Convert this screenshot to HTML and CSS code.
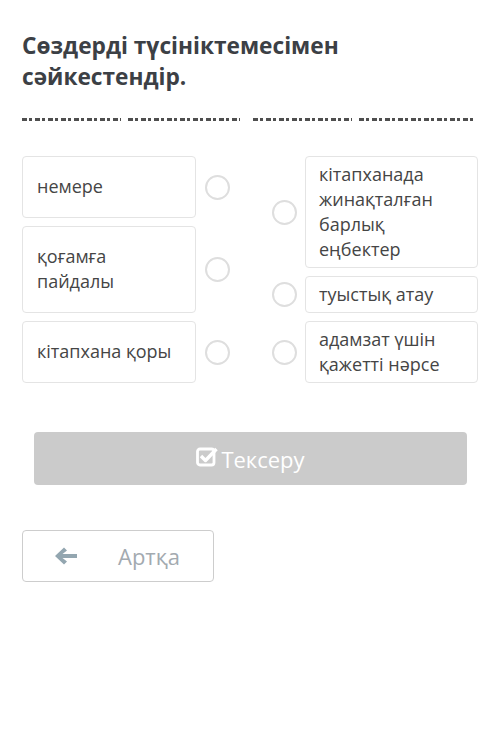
FILE: index.html
```html
<!DOCTYPE html>
<html lang="kk">
<head>
    <meta charset="UTF-8">
    <meta name="viewport" content="width=device-width, initial-scale=1.0">
    <title>Сәйкестендіру</title>
    <link rel="stylesheet" href="styles.css">
</head>
<body>

    <h2 class="task-title">Сөздерді түсініктемесімен сәйкестендір.</h2>

    <!-- cut-off instruction line -->
    <div class="hint-line">
        <span class="w1"></span><span class="w2"></span><span class="w1"></span><span class="w2"></span>
    </div>

    <div class="match">
        <div class="col col-left">
            <div class="row">
                <div class="card">немере</div>
                <span class="dot"></span>
            </div>
            <div class="row">
                <div class="card">қоғамға<br>пайдалы</div>
                <span class="dot"></span>
            </div>
            <div class="row">
                <div class="card">кітапхана қоры</div>
                <span class="dot"></span>
            </div>
        </div>

        <div class="col col-right">
            <div class="row">
                <span class="dot"></span>
                <div class="card">кітапханада<br>жинақталған<br>барлық<br>еңбектер</div>
            </div>
            <div class="row">
                <span class="dot"></span>
                <div class="card">туыстық атау</div>
            </div>
            <div class="row">
                <span class="dot"></span>
                <div class="card">адамзат үшін<br>қажетті нәрсе</div>
            </div>
        </div>
    </div>

    <button class="btn-check" type="button">
        <svg class="ico-check" width="23" height="21" viewBox="0 0 23 21">
            <rect x="1.5" y="3" width="16.5" height="16" rx="2.5" fill="none" stroke="#fff" stroke-width="2.8"/>
            <path d="M5 10 L9.5 14.5 L20.5 3" fill="none" stroke="#fff" stroke-width="3.4" stroke-linejoin="round"/>
        </svg>Тексеру
    </button>

    <button class="btn-back" type="button">
        <svg class="ico-arrow" width="24" height="20" viewBox="0 0 24 20">
            <path d="M1 10 L10 1.5 L13 4.5 L8.5 8 L23 8 L23 12 L8.5 12 L13 15.5 L10 18.5 Z" fill="#93a6b0"/>
        </svg>
        <span>Артқа</span>
    </button>

</body>
</html>
```

FILE: styles.css
```css
body {
    margin: 0;
    padding: 0 22px;
    background: #fff;
    font-family: "Open Sans", Arial, sans-serif;
    color: #444;
}
.task-title {
    margin: 0;
    padding-top: 30px;
    width: 350px;
    font-size: 22.7px;
    font-weight: 700;
    line-height: 31px;
    color: #3c4045;
}
.hint-line {
    display: flex;
    margin-top: 26px;
    height: 3px;
}
.hint-line span {
    height: 3px;
    background: repeating-linear-gradient(90deg, #4f4f4f 0 5px, transparent 5px 7px, #4f4f4f 7px 10px, transparent 10px 13px);
}
.hint-line .w1 { width: 99px; margin-right: 7px; }
.hint-line .w2 { width: 112px; margin-right: 13px; }
.hint-line span:last-child { margin-right: 0; width: 115px; }

.match {
    display: flex;
    justify-content: space-between;
    margin-top: 35px;
}
.col {
    display: flex;
    flex-direction: column;
    gap: 8px;
}
.row {
    display: flex;
    align-items: center;
    gap: 9px;
}
.col-right .row {
    gap: 8px;
}
.card {
    width: 145px;
    border: 1px solid #e4e4e4;
    border-radius: 4px;
    font-size: 18px;
    line-height: 25px;
    color: #454545;
}
.col-left .card {
    width: 144px;
    padding: 17px 14px 18px;
}
.col-right .card {
    padding: 5px 13px;
}
.dot {
    width: 21px;
    height: 21px;
    border: 2px solid #dedede;
    border-radius: 50%;
}

.btn-check {
    display: flex;
    align-items: center;
    justify-content: center;
    width: 433px;
    height: 53px;
    margin: 49px 0 0 12px;
    border: none;
    border-radius: 4px;
    background: #cbcbcb;
    color: #fff;
    font-family: inherit;
    font-size: 22px;
}
.ico-check {
    margin: 0 2px 4px 0;
}
.btn-back {
    display: flex;
    align-items: center;
    width: 192px;
    height: 52px;
    margin-top: 45px;
    padding: 0 0 0 31px;
    border: 1px solid #cdcdcd;
    border-radius: 4px;
    background: #fff;
    color: #a3aab0;
    font-family: inherit;
    font-size: 22px;
}
.btn-back span {
    margin-left: 40px;
}
```
